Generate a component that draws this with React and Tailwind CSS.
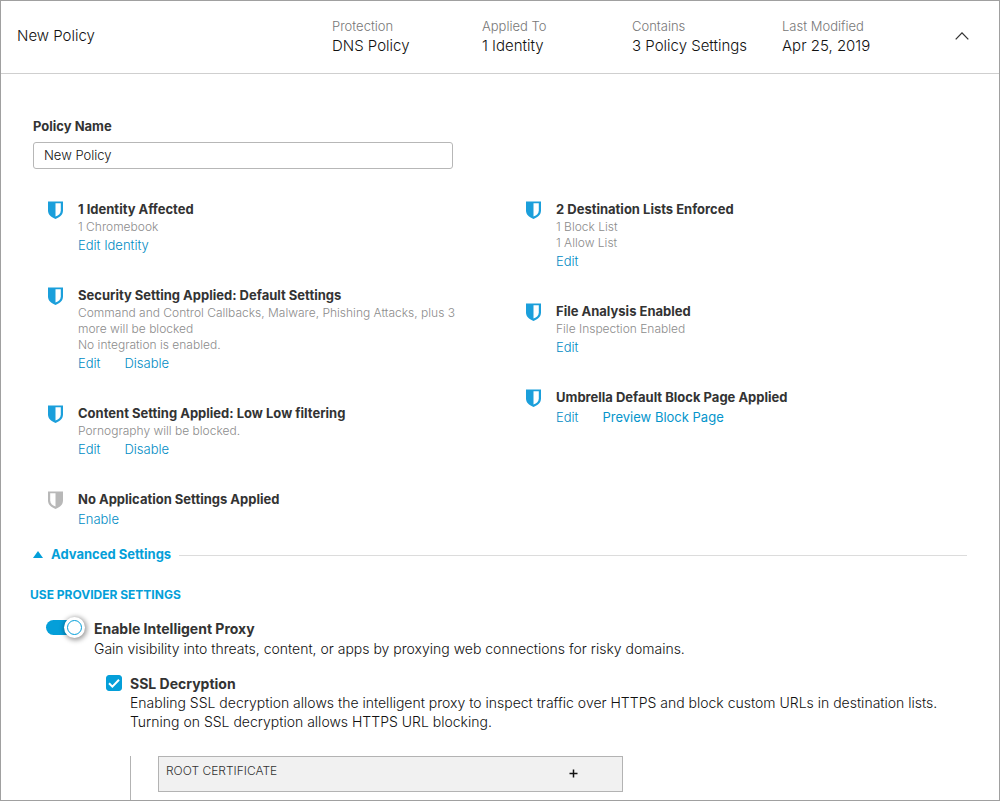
import { useState } from 'react';

const summary = [
  { label: 'Protection', value: 'DNS Policy' },
  { label: 'Applied To', value: '1 Identity' },
  { label: 'Contains', value: '3 Policy Settings' },
  { label: 'Last Modified', value: 'Apr 25, 2019' },
];

const leftItems = [
  { title: '1 Identity Affected', lines: ['1 Chromebook'], links: [{ text: 'Edit Identity' }] },
  {
    title: 'Security Setting Applied: Default Settings',
    lines: [
      'Command and Control Callbacks, Malware, Phishing Attacks, plus 3 more will be blocked',
      'No integration is enabled.',
    ],
    links: [{ text: 'Edit' }, { text: 'Disable' }],
  },
  {
    title: 'Content Setting Applied: Low Low filtering',
    lines: ['Pornography will be blocked.'],
    links: [{ text: 'Edit' }, { text: 'Disable' }],
  },
  { title: 'No Application Settings Applied', lines: [], links: [{ text: 'Enable' }], off: true },
];

const rightItems = [
  { title: '2 Destination Lists Enforced', lines: ['1 Block List', '1 Allow List'], links: [{ text: 'Edit' }] },
  { title: 'File Analysis Enabled', lines: ['File Inspection Enabled'], links: [{ text: 'Edit' }] },
  {
    title: 'Umbrella Default Block Page Applied',
    lines: [],
    links: [{ text: 'Edit' }, { text: 'Preview Block Page', strong: true }],
  },
];

function Shield({ off }) {
  return (
    <svg
      viewBox="0 0 15 18"
      className={off ? 'mt-0.5 h-[18px] w-[15px] shrink-0 text-[#b8b8b8]' : 'mt-0.5 h-[18px] w-[15px] shrink-0 text-[#1b9fdb]'}
      aria-hidden="true"
    >
      <path d="M0 0.5H15V9.5C15 13.8 11.5 16.3 7.5 18C3.5 16.3 0 13.8 0 9.5Z" fill="currentColor" />
      {off ? (
        <path d="M2.2 2.3H7.5V15.6C4.3 14.2 2.2 12.4 2.2 9.4Z" fill="#fff" />
      ) : (
        <path d="M7.5 2.3H12.8V9.4C12.8 12.4 10.7 14.2 7.5 15.6Z" fill="#fff" />
      )}
    </svg>
  );
}

function PolicyItem({ item }) {
  return (
    <li className="flex gap-[15px]">
      <Shield off={item.off} />
      <div className="max-w-[390px] text-[13px]">
        <h3 className="font-bold leading-5 text-[#333]">{item.title}</h3>
        {item.lines.map((line) => (
          <p key={line} className="text-xs font-light leading-4 text-[#8c8c8c]">{line}</p>
        ))}
        <div className="flex gap-6 leading-5">
          {item.links.map((link) => (
            <a key={link.text} href="#" className={link.strong ? 'text-[#0495cc]' : 'font-light text-[#008bc4]'}>
              {link.text}
            </a>
          ))}
        </div>
      </div>
    </li>
  );
}

export default function App() {
  const [name, setName] = useState('New Policy');
  const [proxy, setProxy] = useState(true);
  const [ssl, setSsl] = useState(true);

  return (
    <main className="flex min-h-screen flex-col border border-[#a0a0a0] bg-white font-['Inter',sans-serif] text-[#333]">
      <header className="flex h-[73px] items-center border-b border-[#cfcfcf] pb-0.5 pl-4 pr-[30px]">
        <h1 className="flex-1 text-[15px] font-light leading-5 text-[#111]">{name}</h1>
        <dl className="flex">
          {summary.map((s) => (
            <div key={s.label} className="w-[150px]">
              <dt className="text-[13px] font-light leading-5 text-[#777]">{s.label}</dt>
              <dd className="text-[15px] font-light leading-5 text-[#111]">{s.value}</dd>
            </div>
          ))}
        </dl>
        <button type="button" aria-label="Collapse policy" className="ml-[23px]">
          <svg viewBox="0 0 14 8" className="h-2 w-3.5" fill="none" stroke="#333" strokeWidth="1.3" aria-hidden="true">
            <path d="M0.7 7.4L7 0.9L13.3 7.4" />
          </svg>
        </button>
      </header>

      <div className="flex flex-1 flex-col px-8 pt-[42px]">
        <label htmlFor="policy-name" className="text-[13px] font-bold leading-5">Policy Name</label>
        <input
          id="policy-name"
          type="text"
          value={name}
          onChange={(e) => setName(e.target.value)}
          className="mt-1.5 h-[27px] w-[420px] rounded-[3px] border border-[#b7b7b7] px-2.5 pb-0.5 text-[13px] font-light text-[#111] outline-none"
        />

        <div className="mt-[30px] grid grid-cols-[478px_1fr] pl-[15px]">
          <ul className="space-y-[30px]">
            {leftItems.map((item) => <PolicyItem key={item.title} item={item} />)}
          </ul>
          <ul className="space-y-[30px]">
            {rightItems.map((item) => <PolicyItem key={item.title} item={item} />)}
          </ul>
        </div>

        <div className="mt-[15px] flex items-center gap-2">
          <button type="button" aria-expanded="true" className="flex items-center gap-2 pb-0.5 text-[13px] font-bold leading-5 text-[#049fd9]">
            <svg viewBox="0 0 10 7" className="h-[7px] w-2.5" aria-hidden="true">
              <path d="M5 0L10 7H0Z" fill="currentColor" />
            </svg>
            Advanced Settings
          </button>
          <hr className="flex-1 border-[#dcdcdc]" />
        </div>

        <a href="#" className="-ml-[3px] mt-[19px] self-start text-xs font-bold leading-5 text-[#049fd9]">USE PROVIDER SETTINGS</a>

        <section className="mt-[14px] flex flex-1 gap-3 pl-[13px]">
          <input
            id="proxy"
            type="checkbox"
            role="switch"
            checked={proxy}
            onChange={(e) => setProxy(e.target.checked)}
            className="mt-px flex h-[15px] w-9 shrink-0 appearance-none justify-start rounded-full bg-[#bbb] after:size-[15px] after:rounded-full after:border after:border-[#bbb] after:bg-white after:shadow-[0_0_0_3px_#fff,1px_1px_5px_4px_#0006] checked:justify-end checked:bg-[#049fd9] checked:after:border-[#049fd9]"
          />
          <div className="flex flex-1 flex-col text-sm leading-5">
            <label htmlFor="proxy" className="self-start font-bold">Enable Intelligent Proxy</label>
            <p className="font-light text-[#111]">
              Gain visibility into threats, content, or apps by proxying web connections for risky domains.
            </p>

            <div className="mt-[15px] flex flex-1 gap-2 pl-3">
              <span className="mt-px grid size-4 shrink-0">
                <input
                  id="ssl"
                  type="checkbox"
                  checked={ssl}
                  onChange={(e) => setSsl(e.target.checked)}
                  className="peer col-start-1 row-start-1 size-4 appearance-none rounded-[3px] border border-[#049fd9] checked:bg-[#049fd9]"
                />
                <svg
                  viewBox="0 0 16 16"
                  className="pointer-events-none invisible col-start-1 row-start-1 size-4 peer-checked:visible"
                  fill="none"
                  stroke="#fff"
                  strokeWidth="2"
                  aria-hidden="true"
                >
                  <path d="M3 8.2L6.4 11.6L13 4.8" />
                </svg>
              </span>
              <div className="flex flex-1 flex-col">
                <label htmlFor="ssl" className="self-start font-bold leading-[19px]">SSL Decryption</label>
                <p className="font-light leading-[19px] text-[#111]">
                  Enabling SSL decryption allows the intelligent proxy to inspect traffic over HTTPS and block custom URLs in destination lists.
                  <br />
                  Turning on SSL decryption allows HTTPS URL blocking.
                </p>
                <div className="mt-[25px] flex-1 border-l border-[#b3b3b3] pl-[27px]">
                  <button type="button" className="flex h-9 w-[465px] items-center justify-between border border-[#b3b3b3] bg-[#f1f1f1] pl-[7px] pr-11 text-xs font-light text-[#333]">
                    <span className="pb-1.5">ROOT CERTIFICATE</span>
                    <svg viewBox="0 0 9 9" className="mb-0.5 size-[9px]" stroke="#111" strokeWidth="1.5" aria-hidden="true">
                      <path d="M4.5 0.5V8.5M0.5 4.5H8.5" />
                    </svg>
                  </button>
                </div>
              </div>
            </div>
          </div>
        </section>
      </div>
    </main>
  );
}
